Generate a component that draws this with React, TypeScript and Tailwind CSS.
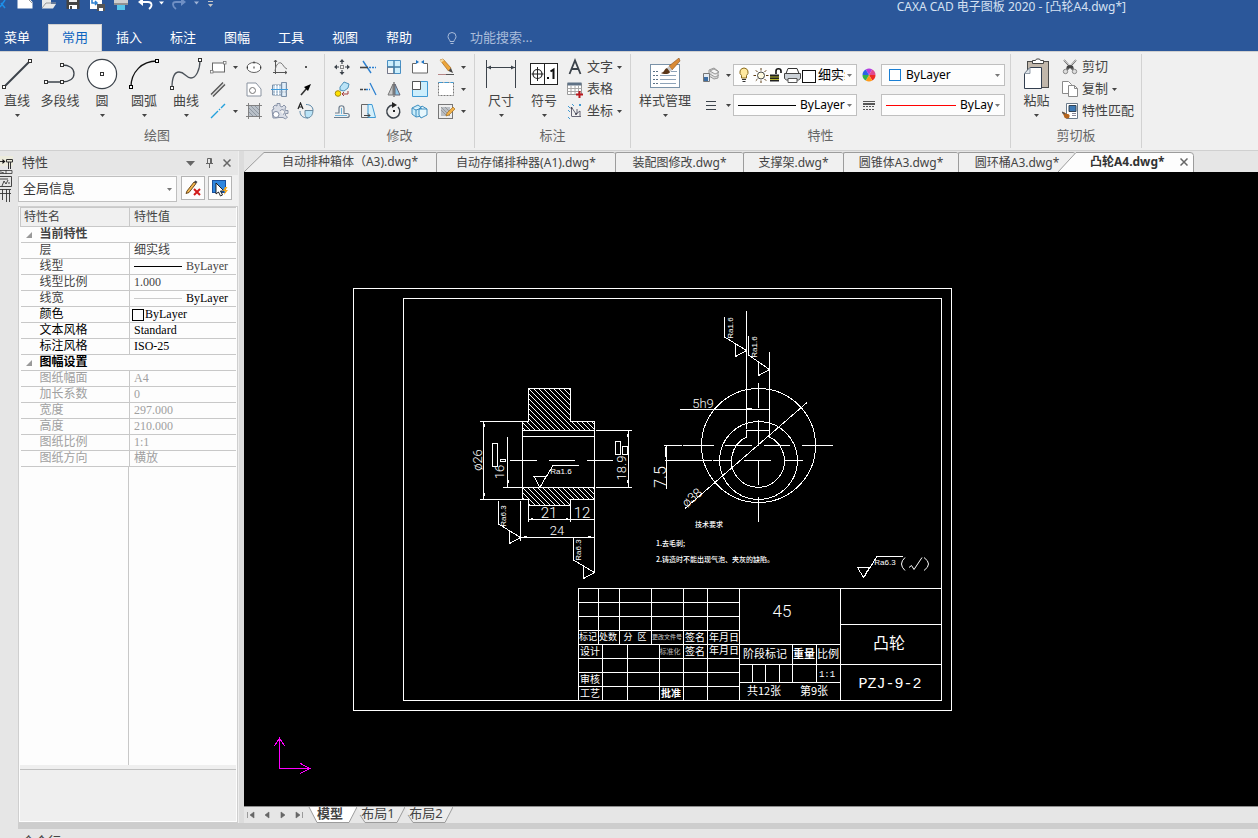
import React from 'react';

type Kids = { children?: React.ReactNode };

const Caret = ({ className = 'text-[#444]' }: { className?: string }) => (
  <svg width="5" height="3" viewBox="0 0 5 3" className={`shrink-0 ${className}`} aria-hidden="true">
    <path d="M0 0h5L2.500 3z" fill="currentColor" />
  </svg>
);

const Ico = ({ children, w = 18, h = 18 }: Kids & { w?: number; h?: number }) => (
  <svg width={w} height={h} viewBox={`0 0 ${w} ${h}`} fill="none" className="shrink-0" aria-hidden="true">
    {children}
  </svg>
);

const Node = ({ x, y, c = '#333' }: { x: number; y: number; c?: string }) => (
  <rect x={x - 1.5} y={y - 1.5} width="3" height="3" fill="#fff" stroke={c} />
);

/* ---------- ribbon icons, large ---------- */
const big = {
  line: (
    <Ico w={32} h={32}>
      <path d="M3 29 29 3" stroke="#3c434b" strokeWidth="2" />
      <Node x={3} y={29} /><Node x={29} y={3} />
    </Ico>
  ),
  polyline: (
    <Ico w={32} h={32}>
      <path d="M2 24h16M18 7c7 0 12 3 12 8.500S25 24 18 24" stroke="#3c434b" strokeWidth="1.300" />
      <Node x={2} y={24} /><Node x={18} y={24} /><Node x={18} y={7} />
    </Ico>
  ),
  circle: (
    <Ico w={32} h={32}>
      <circle cx="16" cy="16" r="14.600" fill="#fff" stroke="#3c434b" strokeWidth="1.200" />
      <Node x={16} y={16} />
    </Ico>
  ),
  arc: (
    <Ico w={32} h={32}>
      <path d="M3 29C3 14 14 3 29 3" stroke="#111" strokeWidth="1.300" />
      <Node x={3} y={29} c="#000" /><Node x={29} y={3} c="#000" />
    </Ico>
  ),
  curve: (
    <Ico w={32} h={32}>
      <path d="M2 30c0-9 2-16 7-16 6 0 7 6 12 6 5 0 9-8 9-18" stroke="#4c535b" strokeWidth="1.300" />
      <Node x={2} y={30} /><Node x={30} y={2} />
    </Ico>
  ),
  dimension: (
    <Ico w={32} h={32}>
      <path d="M1.500 2v28M30.500 2v28M2 9.500h28" stroke="#3c434b" />
      <path d="m2 9.500 4-2v4zM30 9.500l-4-2v4z" fill="#3c434b" />
    </Ico>
  ),
  symbol: (
    <Ico w={30} h={32}>
      <rect x="1.500" y="5.500" width="27" height="21" fill="#fff" stroke="#222" />
      <path d="M15.500 6v20M2.500 16h12M8.500 9v14" stroke="#222" />
      <circle cx="8.500" cy="16" r="4.500" stroke="#222" strokeWidth="1.200" />
      <rect x="18" y="19" width="2" height="2" fill="#111" />
      <path d="m21.500 13.500 3-2v9.500" stroke="#111" strokeWidth="2" />
    </Ico>
  ),
  style: (
    <Ico w={32} h={32}>
      <rect x="1.500" y="6.500" width="29" height="23" fill="#fff" stroke="#7a92a8" />
      <path d="M4 13.500h5M4 17.500h5M4 21.500h5M4 25.500h5" stroke="#5b7288" strokeDasharray="2 1" />
      <path d="M11 17.500h16M11 21.500h16M11 25.500h16M22 13.500h6" stroke="#8ea3b8" />
      <path d="M30 0 20 8l3 4 8-9z" fill="#d98a35" stroke="#8a4f1c" strokeWidth=".6" />
      <path d="m20 8-2 2 3 4 2-2z" fill="#c9c9c9" />
      <path d="M18 10c-3 1-2 4-6 5 3 2 9 1 9-1z" fill="#5b3719" />
    </Ico>
  ),
  paste: (
    <Ico w={32} h={32}>
      <rect x="6.500" y="3.500" width="21" height="26" fill="#c1b7ab" stroke="#4a4a4a" />
      <path d="M11.500 5.500v-3h3l1-1.500h3l1 1.500h3v3z" fill="#fff" stroke="#444" />
      <path d="M3.500 15.500 9 9.500h11.500v21h-17z" fill="#fff" stroke="#333f50" />
      <path d="M3.500 15.500H9v-6z" fill="#dfe5ea" stroke="#7a8794" strokeWidth=".8" />
    </Ico>
  ),
};

/* ---------- ribbon icons, small ---------- */
const small = {
  rect: (
    <Ico>
      <rect x="3.500" y="5" width="12" height="9" fill="#fff" stroke="#666" />
      <rect x="1.500" y="12.500" width="2.500" height="2.500" fill="#fff" stroke="#777" strokeWidth=".8" />
      <rect x="14.500" y="3.500" width="2.500" height="2.500" fill="#fff" stroke="#777" strokeWidth=".8" />
    </Ico>
  ),
  ellipse: (
    <Ico>
      <ellipse cx="9" cy="9.500" rx="7" ry="5" fill="#fff" stroke="#666" />
      <path d="M8.500 9.500h1M8.500 4.500h1M2 9.500h1M15 9.500h1" stroke="#333" strokeWidth="2" />
    </Ico>
  ),
  wave: (
    <Ico>
      <path d="M4.500 2v14M2 14.500h14" stroke="#555" />
      <path d="M4 13c1-7 4-9 6-8s3 5 6 6" stroke="#777" />
      <path d="m3 4 1.500-2L6 4M14 13l2 1.500-2 1.500" stroke="#555" />
    </Ico>
  ),
  point: <Ico><rect x="8" y="8" width="2" height="2" fill="#555" /></Ico>,
  parallel: <Ico><path d="M2 14.500 14 2.500M4 16.500 16 4.500" stroke="#555" strokeWidth="1.400" /><path d="m3 15.500 12-12" stroke="#bbb" /></Ico>,
  contour: (
    <Ico>
      <path d="M2 3h9l5 6v7H2z" fill="#fff" stroke="#8a93a0" />
      <circle cx="7.500" cy="10.500" r="3" fill="#fff" stroke="#777" />
    </Ico>
  ),
  shaft: (
    <Ico>
      <path d="M1.500 5h9v10h-9zM10.500 2.500h5v14h-5z" fill="#c8dced" stroke="#7b8fa6" />
      <path d="M1.500 12h14" stroke="#9ab" />
      <path d="M4.500 5v10M7.500 5v10M13 3v13" stroke="#fff" />
      <path d="M0 9.500h17" stroke="#3e9bdc" />
    </Ico>
  ),
  arrow: <Ico><path d="m4 15 6-7" stroke="#333" strokeWidth="1.600" /><path d="m14 4-7 3 4 4z" fill="#000" /></Ico>,
  center: <Ico><path d="m2 16 7-7M10 8l1-1M12 6l4-4" stroke="#23a0dc" strokeWidth="1.400" /></Ico>,
  hatch: (
    <Ico>
      <rect x="3.500" y="3.500" width="11" height="11" fill="#b9c0c8" />
      <path d="m4 6 8 8M6 4l8 8M4 10l4 4M10 4l4 4" stroke="#8f98a2" />
      <path d="M1 3.500h16M1 14.500h16M3.500 1v16M14.500 1v16" stroke="#777" strokeWidth=".9" />
    </Ico>
  ),
  gear: (
    <Ico>
      <path d="M6 1.500h3v2.500l2 1 2-2 2 2-1 2 .5 1.500H17v3h-2.500v2l2 1.500-2 2-2.500-1.500H8L5 16H2L1 8l2-1-1-2 2-2 2 1z" fill="#d9dde6" stroke="#7f8aa0" strokeWidth=".9" />
      <circle cx="5" cy="12.500" r="3" fill="#fff" stroke="#7f8aa0" />
      <path d="M9 9a2.500 2.500 0 1 1 3 3.500" fill="#f0f0f0" stroke="#7f8aa0" strokeWidth=".9" />
    </Ico>
  ),
  block: (
    <Ico>
      <path d="M8 8.500h8c0 4-2 7-5 7.500-2 0-3-2-3-4z" fill="#b9e3f7" stroke="#6b8ba0" />
      <path d="M9 2.500c4 0 7 2 7 6M3 9c0 4 2 7 8 7" stroke="#5b88a8" />
      <path d="m1 7 2.500-6L6 7M2 5h3" stroke="#222" strokeWidth="1.200" />
    </Ico>
  ),
  move: (
    <Ico>
      <rect x="7.500" y="7.500" width="3" height="3" stroke="#888" />
      <path d="m9 1 2.500 3h-5zM9 17l2.500-3h-5zM1 9l3-2.500v5zM17 9l-3-2.500v5z" fill="#3c434b" />
      <path d="M9 3v3M9 12v3M3 9h3M12 9h3" stroke="#3c434b" strokeWidth="1.200" />
    </Ico>
  ),
  trim: <Ico><path d="m4 3 8 12" stroke="#2b7fd0" strokeWidth="1.400" /><path d="M1 9.500h8" stroke="#444" strokeWidth="1.600" /><path d="M10 9.500h7" stroke="#2b7fd0" strokeDasharray="2 1" strokeWidth="1.600" /></Ico>,
  array: (
    <Ico>
      <path d="M2.500 2.500h13v13h-13z" fill="#cdeefc" stroke="#4a90c4" />
      <path d="M2.500 9h6.500v6.500H2.500z" fill="#f7f7f7" stroke="#778" />
      <path d="M9 2.500v13M2.500 9h13" stroke="#3f7ea8" strokeWidth="1.400" />
    </Ico>
  ),
  stretch: <Ico><path d="M5 5.500H1.500V15h15V5.500H13" fill="#fff" stroke="#666" /><path d="M5 2v4l3-2zM13 2v4l-3-2z" fill="#1d74c4" /></Ico>,
  pencil: (
    <Ico>
      <path d="m3 2 3-1 8 9-2.500 3z" fill="#eda63a" stroke="#a4661b" strokeWidth=".7" />
      <path d="m11.500 13 2.500-3 2 5z" fill="#444" />
      <path d="M1 16.500h8" stroke="#b58686" /><path d="M9 16.500h8" stroke="#555" />
      <path d="m3 2 3-1 1 1.500-3 2z" fill="#f5d9a0" />
    </Ico>
  ),
  copy: (
    <Ico>
      <circle cx="5" cy="13.500" r="2.800" fill="#ffe100" stroke="#a58a10" />
      <path d="m7 7 4-5 5 2-1 4-4 3-4-1z" fill="#b9e3f7" stroke="#4d91b8" />
      <path d="M15 11v3H9m2-2-2 2 2 2" stroke="#a43c3c" />
    </Ico>
  ),
  extend: <Ico><path d="M1 9.500h6" stroke="#444" strokeWidth="1.600" strokeDasharray="3 1" /><path d="M7 9.500h4" stroke="#2b7fd0" strokeWidth="1.600" strokeDasharray="2 1" /><path d="m11 3 6 12" stroke="#2b7fd0" strokeWidth="1.300" /></Ico>,
  mirror: <Ico><path d="M8 4v11H3z" fill="#c9c9c9" stroke="#777" /><path d="M10 4v11h5z" fill="#8fc9ea" stroke="#667" /><path d="M9 2v15" stroke="#444" /></Ico>,
  scale: <Ico><path d="M1.500 1.500h15v15h-15z" fill="#cdeefc" stroke="#3f9ad4" /><path d="M1.500 1.500h8v8h-8z" fill="#fff" stroke="#555" /></Ico>,
  dotted: <Ico><rect x="1.500" y="2.500" width="15" height="13" fill="#fff" stroke="#777" strokeDasharray="2 1" /><path d="M1.500 2.500h15" stroke="#3f9ad4" strokeDasharray="4 2" /></Ico>,
  offset: <Ico><path d="M1 15.500h13c3 0 3-4 0-4h-3V6c0-3-5-3-5 0v5H2" stroke="#6c7c8c" strokeWidth="1.200" /><path d="M2 13.500h12M8.500 6v6" stroke="#6cb4dc" /></Ico>,
  taper: <Ico><path d="M2.500 2.500h9v13h-9z" fill="#eee" stroke="#666" /><path d="M9 2.500h4l3.500 13H9z" fill="#d5f0fb" stroke="#3f9ad4" /><path d="M5 13.500h6m-2-2 2 2-2 2" stroke="#444" /></Ico>,
  rotate: <Ico><path d="M8 3a6.500 6.500 0 1 0 5 2" stroke="#3c434b" strokeWidth="1.500" /><path d="m7 0 5 3-5 3z" fill="#222" /><rect x="8" y="8" width="2" height="2" fill="#222" /></Ico>,
  solid: <Ico><path d="M1 6l6-3 4 3v8l-6 1-4-3z" fill="#c9ecfa" stroke="#3f8fc0" /><path d="M8 7h8v6l-6 3-2-3zM8 7l3-3 5 3M1 6l4 2 6-2M5 8v7" fill="#e7f7fd" stroke="#3f8fc0" /></Ico>,
  editHatch: <Ico><rect x="1.500" y="2.500" width="14" height="14" fill="#eee" stroke="#777" /><path d="M4 5h9v9H4z" fill="#b9bec4" /><path d="m4 8 6 6M4 5l9 9M8 5l5 5" stroke="#999" /><path d="m10 11 6-6 2 2-6 6-3 1z" fill="#f0b14a" stroke="#9a6516" strokeWidth=".6" /></Ico>,
  text: <Ico w={16}><path d="M2.500 16 8 2.500 13.500 16M4.500 11h7" stroke="#3c434b" strokeWidth="1.800" /></Ico>,
  table: (
    <Ico w={16}>
      <path d="M.5 3.500h14v11H.5z" fill="#fff" stroke="#999" /><path d="M.5 2.500h14v3H.5z" fill="#5f7286" />
      <path d="M.5 8.500h14M.5 11.500h14M4 5.500v9M8 5.500v9M11.500 5.500v9" stroke="#aaa" />
      <path d="M9 14.500h7M12.500 11v7" stroke="#b8191f" strokeWidth="2" />
    </Ico>
  ),
  coord: (
    <Ico w={16}>
      <path d="M4.500 5v9M4.500 14.500H14M5 6l4 6 4-3M10 7v5M13 9v5" stroke="#556" strokeWidth=".9" />
      <path d="m1 4 2 2M1 8l2 2M5 2l2 2M12 2l2 2M14 2l-2 2M1 15l2 2" stroke="#3f9ad4" />
      <circle cx="4.500" cy="6" r="1" fill="#445" /><circle cx="9" cy="12" r="1" fill="#445" />
    </Ico>
  ),
  layers: (
    <Ico>
      <path d="m7 4 5-2 4 3v7l-4 1-5-3z" fill="#dcdcdc" stroke="#999" />
      <path d="m8 5 4-2 5 3-4 2zM8 8l5 3 4-2" fill="#f5f5f5" stroke="#888" strokeWidth=".8" />
      <path d="M1.500 7.500h6v8h-6z" fill="#e4ecf4" stroke="#777" /><path d="M2 11h4v4H2z" fill="#3c6ea5" />
    </Ico>
  ),
  lines: <Ico><path d="M4 5.500h10M4 9.500h10M4 13.500h10" stroke="#3c434b" strokeWidth="1.200" /></Ico>,
  wheel: (
    <Ico w={16} h={16}>
      <path d="M8 8 4.750 2.400a6.500 6.500 0 0 1 6.500 0z" fill="#b43ee0" /><path d="m8 8 3.250-5.600A6.500 6.500 0 0 1 14.500 8z" fill="#e14a90" />
      <path d="M8 8h6.500a6.500 6.500 0 0 1-3.250 5.600z" fill="#ee2b24" /><path d="m8 8 3.250 5.600a6.500 6.500 0 0 1-6.500 0z" fill="#ff9a1a" />
      <path d="M8 8 4.750 13.600A6.500 6.500 0 0 1 1.500 8z" fill="#33b34a" /><path d="M8 8H1.500a6.500 6.500 0 0 1 3.250-5.600z" fill="#2b63e8" />
    </Ico>
  ),
  weights: <Ico w={14} h={16}><path d="M1 4.500h12" stroke="#555" /><path d="M1 7h12" stroke="#555" strokeWidth="2" /><path d="M1 9.500h12M1 12.500h12" stroke="#555" strokeDasharray="2 1" /></Ico>,
  cut: (
    <Ico w={16} h={16}>
      <path d="m2 1 9 10M14 1 5 11" stroke="#666" strokeWidth="1.800" />
      <path d="m2 1 6 6M14 1 8 7" stroke="#eee" strokeWidth=".7" />
      <path d="m5 7 3-1 3 1 1 3-4-1-4 1z" fill="#444" />
      <circle cx="3.500" cy="12.500" r="2.200" fill="#ddd" stroke="#888" /><circle cx="12.500" cy="12.500" r="2.200" fill="#ddd" stroke="#888" />
    </Ico>
  ),
  duplicate: <Ico w={16} h={16}><path d="M.5 .5h6l3 3v9h-9z" fill="#fff" stroke="#8a8a8a" /><path d="M6.500 4.500h6l3 3v8h-9z" fill="#fff" stroke="#8a8a8a" /><path d="M12.500 4.500v3h3" stroke="#8a8a8a" /></Ico>,
  match: (
    <Ico w={16} h={16}>
      <path d="M4.500 .5h11v15h-11z" fill="#fff" stroke="#6a7a8a" /><path d="M7 2.500h7v6H7z" fill="#3c78b4" stroke="#345" />
      <path d="M10 10.500h4M10 12.500h4" stroke="#889" /><path d="M0 9c3 0 3 1 5 2 3 0 3 2 2 4-3 1-5 0-5-2z" fill="#b5651d" /><path d="m0 9 3 2" stroke="#555" strokeWidth="1.500" />
    </Ico>
  ),
};

const BigButton = ({ icon, label, caret = true, className }: { icon: React.ReactNode; label: string; caret?: boolean; className: string }) => (
  <button type="button" className={`flex h-17 shrink-0 flex-col items-center pt-0.5 ${className}`}>
    {icon}
    <span className="mt-0.5 h-4 whitespace-nowrap leading-4">{label}</span>
    <span className="mt-1.5 flex h-1">{caret && <Caret />}</span>
  </button>
);

const IconButton = ({ label, children }: Kids & { label: string }) => (
  <button type="button" aria-label={label} className="flex h-5.5 items-center justify-center">{children}</button>
);

const RowButton = ({ icon, label, caret }: { icon: React.ReactNode; label: string; caret?: boolean }) => (
  <button type="button" className="flex h-5.5 items-center whitespace-nowrap leading-4">
    {icon}
    <span className="mr-1 ml-1 pb-0.5">{label}</span>
    {caret && <Caret />}
  </button>
);

const Group = ({ title, className, titleClass = '', children }: Kids & { title: string; className: string; titleClass?: string }) => (
  <section className={`flex shrink-0 flex-col border-r border-[#d2d2d2] ${className}`}>
    <div className="flex h-17.5 pt-0.5">{children}</div>
    <h2 className={`mt-px text-center leading-5 text-[#666] ${titleClass}`}>{title}</h2>
  </section>
);

const Combo = ({ label, value, className, selectClass = '', children }: Kids & { label: string; value: string; className: string; selectClass?: string }) => (
  <div className={`flex items-center border border-[#bfbfbf] bg-[#fdfdfd] pr-1 pl-1 ${className}`}>
    {children}
    <select aria-label={label} className={`min-w-0 flex-1 appearance-none overflow-hidden bg-transparent text-clip ${selectClass}`}>
      <option>{value}</option>
    </select>
    <Caret className="ml-0.5 text-[#777]" />
  </div>
);

const drawTools: [string, React.ReactNode, boolean?][] = [
  ['矩形', small.rect, true], ['椭圆', small.ellipse], ['波浪线', small.wave], ['点', small.point],
  ['平行线', small.parallel, false], ['轮廓', small.contour], ['孔/轴', small.shaft], ['箭头', small.arrow],
  ['中心线', small.center, true], ['剖面线', small.hatch], ['齿轮', small.gear], ['块', small.block],
];

const editTools: [string, React.ReactNode][][] = [
  [['平移', small.move], ['裁剪', small.trim], ['阵列', small.array], ['拉伸', small.stretch], ['删除', small.pencil]],
  [['平移复制', small.copy], ['延伸', small.extend], ['镜像', small.mirror], ['缩放', small.scale], ['打断', small.dotted]],
  [['等距线', small.offset], ['过渡', small.taper], ['旋转', small.rotate], ['分解', small.solid], ['编辑', small.editHatch]],
];

const combo = 'h-5.5 w-[124px] text-[12px] text-black';

const Ribbon = () => (
  <div className="flex h-25 shrink-0 overflow-hidden border-t border-b border-[#d0d0d0] bg-[#f0f0f0] py-0.5 text-[#444]">
    <Group title="绘图" className="w-[325px]" titleClass="pr-2.5">
      <BigButton icon={big.line} label="直线" className="w-[34px]" />
      <BigButton icon={big.polyline} label="多段线" caret={false} className="w-[52px]" />
      <BigButton icon={big.circle} label="圆" className="w-[32px]" />
      <BigButton icon={big.arc} label="圆弧" className="w-[52px]" />
      <BigButton icon={big.curve} label="曲线" className="w-[32px]" />
      <div className="ml-1.5 grid grid-cols-[20px_14px_24px_28px_24px] content-start">
        {drawTools.map(([label, icon, caret]) => (
          <React.Fragment key={label}>
            <IconButton label={label}>{icon}</IconButton>
            {caret !== undefined && <span className="flex items-center justify-center">{caret && <Caret />}</span>}
          </React.Fragment>
        ))}
      </div>
    </Group>
    <Group title="修改" className="w-[150px]">
      <div className="ml-1 grid grid-cols-[26px_26px_26px_26px_26px_8px] content-start">
        {editTools.map((row, i) => (
          <React.Fragment key={i}>
            {row.map(([label, icon]) => <IconButton key={label} label={label}>{icon}</IconButton>)}
            <span className="flex items-center justify-center"><Caret /></span>
          </React.Fragment>
        ))}
      </div>
    </Group>
    <Group title="标注" className="w-[156px] pl-1" titleClass="pr-1">
      <BigButton icon={big.dimension} label="尺寸" className="w-[44px]" />
      <BigButton icon={big.symbol} label="符号" className="w-[42px]" />
      <div className="ml-0.5">
        <RowButton icon={small.text} label="文字" caret />
        <RowButton icon={small.table} label="表格" />
        <RowButton icon={small.coord} label="坐标" caret />
      </div>
    </Group>
    <Group title="特性" className="w-[380px]">
      <BigButton icon={big.style} label="样式管理" className="w-[68px]" />
      <div className="flex flex-col gap-2 pt-2">
        <div className="flex items-center">
          <button type="button" aria-label="图层" className="flex h-5.5 w-6 items-center justify-center">{small.layers}</button>
          <span className="flex w-2.5 justify-center"><Caret /></span>
          <Combo label="当前图层" value="细实线" className={combo} selectClass="text-[13px]">
            <Ico w={80} h={18}>
              <path d="M6 2a4.200 4.200 0 0 0-2.500 7.500V12h5V9.500A4.200 4.200 0 0 0 6 2z" fill="#ffe9a0" stroke="#8a6a1c" />
              <path d="M4 13.500h4M4.500 15.500h3" stroke="#333" />
              <circle cx="23" cy="9.500" r="3.500" fill="#fffbe0" stroke="#444" />
              <path d="M23 2v2.500M23 14.500V17M15.500 9.500H18M28 9.500h2.500M17.800 4.300l1.700 1.700M26.500 13l1.700 1.700M28.200 4.300 26.500 6M19.500 13l-1.700 1.700" stroke="#5a3a10" />
              <path d="M32 8.500h9v7h-9z" fill="#222" /><path d="M32 11h9M32 13.500h9" stroke="#b5b52a" />
              <path d="M38 8V5c0-3 5-3 5 0v2" stroke="#111" strokeWidth="1.600" />
              <path d="M50 2.500h9l2 5H48z" fill="#fff" stroke="#333" /><path d="M46.500 7.500h16v5l-2 1.500h-12l-2-1.500z" fill="#ccd2d8" stroke="#444" />
              <path d="M50 12.500h9v4h-9z" fill="#fff" stroke="#555" />
              <rect x="64.500" y="4.500" width="13" height="12" fill="#fff" stroke="#111" />
            </Ico>
          </Combo>
          <span className="flex w-6 justify-center">{small.wheel}</span>
          <Combo label="颜色" value="ByLayer" className={combo} selectClass="ml-1">
            <Ico w={16} h={16}><rect x="3.500" y="2.500" width="11" height="11" fill="#fff" stroke="#1a7fd4" /></Ico>
          </Combo>
        </div>
        <div className="flex items-center">
          <button type="button" aria-label="线型管理" className="flex h-5.5 w-6 items-center justify-center">{small.lines}</button>
          <span className="flex w-2.5 justify-center"><Caret /></span>
          <Combo label="线型" value="ByLayer" className={combo} selectClass="ml-1">
            <span className="h-px w-[58px] bg-black" />
          </Combo>
          <span className="flex w-6 justify-center">{small.weights}</span>
          <Combo label="线宽" value="ByLayer" className={combo}>
            <span className="mr-1 h-px w-[70px] bg-[#ff0000]" />
          </Combo>
        </div>
      </div>
    </Group>
    <Group title="剪切板" className="w-[131px]">
      <BigButton icon={big.paste} label="粘贴" className="w-[51px]" />
      <div>
        <RowButton icon={small.cut} label="剪切" />
        <RowButton icon={small.duplicate} label="复制" caret />
        <RowButton icon={small.match} label="特性匹配" />
      </div>
    </Group>
  </div>
);

const QuickAccess = () => (
  <svg width="220" height="12" viewBox="0 0 220 12" fill="none" className="shrink-0" aria-hidden="true">
    <path d="m0 7 5-7M1 3l4 5" stroke="#1d8fe8" strokeWidth="1.500" />
    <path d="M17.500 0v8.500h15V2l-3-3z" fill="#fff" /><path d="m29 0 3 3" stroke="#999" />
    <path d="M42 0h9v4h5l-3 4.500H42z" fill="#e9e9e9" /><path d="m42 8 4-5h10" stroke="#9a9a9a" />
    <path d="M66.500 0h13v9h-13z" fill="#444" /><path d="M69 0h8v2h-8z" fill="#eee" /><path d="M69 5h8v4h-8z" fill="#fff" /><path d="M70 6h2v3h-2z" fill="#444" />
    <path d="M90 0h12v9H90z" fill="#fff" /><path d="M92 0v3h5m-2-2 2 2-2 2" stroke="#2b7fd0" strokeWidth="1.500" /><path d="M97 4h8v7h-8z" fill="#555" /><path d="M99 8h4v3h-4z" fill="#fff" />
    <path d="M114 0h14v5h-14z" fill="#cfcfcf" /><path d="M114 4h14" stroke="#555" /><path d="M117 5h8v5h-8z" fill="#57c6ea" />
    <path d="M141 2h7c4 0 5 4 1 7" stroke="#fff" strokeWidth="1.800" /><path d="m138 2 5-4v8z" fill="#fff" />
    <path d="M159 1.500h5l-2.500 3z" fill="#fff" />
    <path d="M183 2h-7c-4 0-4 4 0 7" stroke="#6f8fc4" strokeWidth="1.800" /><path d="m186 2-5-4v8z" fill="#6f8fc4" />
    <path d="M194 1.500h5l-2.500 3z" fill="#9fb3d6" />
    <path d="M208 1.500h5" stroke="#c7c7c7" /><path d="M208 4h5l-2.500 3z" fill="#c7c7c7" />
  </svg>
);

const Header = () => (
  <header className="shrink-0 bg-[#2b579a] text-white">
    <div className="flex h-6 items-start">
      <QuickAccess />
      <h1 className="mr-[132px] ml-auto text-[12px] leading-[14px] whitespace-nowrap text-[#d5e1f2]">CAXA CAD 电子图板 2020 - [凸轮A4.dwg*]</h1>
    </div>
    <nav className="flex h-[27px] items-stretch leading-4">
      <button type="button" className="w-12 pb-0.5 pl-1 text-left">菜单</button>
      <button type="button" className="w-[54px] border border-b-0 border-[#d0d0d0] bg-[#f0f0f0] pb-0.5 text-[#0c64c0]">常用</button>
      {['插入', '标注', '图幅', '工具', '视图', '帮助'].map((t) => (
        <button key={t} type="button" className="w-[54px] pb-0.5">{t}</button>
      ))}
      <label className="ml-5 flex items-center pb-0.5 text-[#a9bcda]">
        <svg width="12" height="14" viewBox="0 0 12 14" fill="none" stroke="currentColor" className="mt-0.5" aria-hidden="true">
          <path d="M4 10.500C4 8.500 2 8 2 5.500a4 4 0 0 1 8 0c0 2.500-2 3-2 5zM4.500 12.500h3" />
        </svg>
        <input aria-label="功能搜索" placeholder="功能搜索..." className="ml-3 w-32 bg-transparent outline-none placeholder:text-[#a9bcda]" />
      </label>
    </nav>
  </header>
);

/* ---------- property panel ---------- */
type Row = { name: string; value?: React.ReactNode; dim?: boolean; head?: boolean; dark?: boolean };

const rows: Row[] = [
  { name: '当前特性', head: true },
  { name: '层', value: '细实线' },
  { name: '线型', value: <span className="flex items-center justify-between pr-2"><i className="h-px w-12 bg-black" />ByLayer</span> },
  { name: '线型比例', value: '1.000' },
  { name: '线宽', value: <span className="flex items-center justify-between pr-2 text-black"><i className="h-px w-12 bg-[#ccc]" />ByLayer</span> },
  { name: '颜色', dark: true, value: <span className="flex items-center"><i className="-ml-0.5 mr-px h-3 w-3 border border-black" />ByLayer</span> },
  { name: '文本风格', value: 'Standard', dark: true },
  { name: '标注风格', value: 'ISO-25', dark: true },
  { name: '图幅设置', head: true, dark: true },
  { name: '图纸幅面', value: 'A4', dim: true },
  { name: '加长系数', value: '0', dim: true },
  { name: '宽度', value: '297.000', dim: true },
  { name: '高度', value: '210.000', dim: true },
  { name: '图纸比例', value: '1:1', dim: true },
  { name: '图纸方向', value: '横放', dim: true },
];

const PropertyPanel = () => (
  <aside className="flex w-[220px] shrink-0 flex-col">
    <div className="flex h-6 items-center pr-0.5 pl-1 text-[#444]">
      <h2 className="flex-1 pb-0.5 leading-4">特性</h2>
      <button type="button" aria-label="选项" className="flex w-5 justify-center">
        <svg width="9" height="5" viewBox="0 0 9 5" aria-hidden="true"><path d="M0 0h9L4.500 5z" fill="#666" /></svg>
      </button>
      <button type="button" aria-label="固定" className="flex w-4.5 justify-center">
        <svg width="9" height="10" viewBox="0 0 9 10" fill="none" stroke="#666" aria-hidden="true"><path d="M2.500 .5h4v5M2.500 .5v5M5.500 .5v5M1 5.500h7M4.500 6v4" /></svg>
      </button>
      <button type="button" aria-label="关闭" className="flex w-4.5 justify-center">
        <svg width="8" height="8" viewBox="0 0 8 8" fill="none" stroke="#666" strokeWidth="1.500" aria-hidden="true"><path d="m.5 .5 7 7M7.500 .5l-7 7" /></svg>
      </button>
    </div>
    <div className="flex justify-between bg-[#f0f0f0] pt-px pr-1.5 pb-1">
      <Combo label="选择范围" value="全局信息" className="h-[26px] w-[159px] text-[#333]" />
      <button type="button" aria-label="清除选择" className="flex h-6 w-6 items-center justify-center border border-[#b4b4b4] bg-[#fdfdfd]">
        <Ico>
          <path d="m3 12 7-9 2 1.500-7 9-3 1z" fill="#f3b64e" stroke="#5b3a10" strokeWidth=".9" /><path d="m10 3 1.500-1.500L13.500 3 12 4.500z" fill="#444" />
          <path d="m10 10 6 6M16 10l-6 6" stroke="#d11a1a" strokeWidth="2" />
        </Ico>
      </button>
      <button type="button" aria-label="快速选择" className="flex h-6 w-6 items-center justify-center border border-[#b4b4b4] bg-[#fdfdfd]">
        <Ico>
          <rect x="1.500" y="1.500" width="13" height="12" fill="#2f86de" stroke="#1a4f9c" />
          <path d="m5 4 8 8h-3.500l2 4-2 1-2-4L5 15z" fill="#fff" stroke="#111" strokeWidth=".9" />
          <path d="m14 8-2 4h2l-1 4 4-5h-2.500l2-3z" fill="#f6a81c" />
        </Ico>
      </button>
    </div>
    <div className="flex min-h-0 flex-1 flex-col border border-[#cfcfcf] bg-[#fdfdfd] px-px pb-px">
      <table className="w-full table-fixed border-collapse text-left text-[12px] leading-[14px] text-[#444] [font-family:'Liberation_Serif','Noto_Sans_CJK_SC',serif]">
        <colgroup><col className="w-[109px]" /><col /></colgroup>
        <thead>
          <tr className="h-[19px] border-t border-b border-[#c8c8c8] bg-[#f0f0f0]">
            <th className="border-r border-l border-[#c8c8c8] py-0 pl-[3px] font-normal">特性名</th>
            <th className="py-0 pl-1 font-normal">特性值</th>
          </tr>
        </thead>
        <tbody>
          {rows.map((r) => (
            <tr key={r.name} className={`h-4 border-b border-[#c8c8c8] ${r.dim ? 'text-[#a0a0a0]' : r.dark ? 'text-black' : 'text-[#444]'}`}>
              {r.head ? (
                <th colSpan={2} className="p-0 font-bold">
                  <span className="flex h-[15px] items-center pl-[5px] leading-[15px]">
                    <svg width="6" height="6" viewBox="0 0 6 6" className="mr-2" aria-hidden="true"><path d="M6 0v6H0z" fill="#999" /></svg>
                    {r.name}
                  </span>
                </th>
              ) : (
                <>
                  <th scope="row" className="border-r border-[#c8c8c8] py-0 pl-[19px] font-normal"><span className="block h-[15px] leading-[15px]">{r.name}</span></th>
                  <td className="py-0 pl-1"><span className="block h-[15px] leading-[15px]">{r.value}</span></td>
                </>
              )}
            </tr>
          ))}
        </tbody>
      </table>
      <div className="grid flex-1 grid-cols-[109px_1fr]">
        <div className="border-r border-[#c8c8c8]" />
      </div>
      <div className="h-1 bg-[#efefef]" />
      <div className="h-13 border-t border-[#c0c0c0] bg-[#efefef]" />
    </div>
  </aside>
);

const SideStrip = () => (
  <div className="w-[18px] shrink-0 pt-1">
    <svg width="14" height="48" viewBox="0 0 14 48" fill="none" stroke="#333" aria-hidden="true">
      <path d="M0 1h13v10H0z" fill="#ecebdc" stroke="none" />
      <path d="M0 6.500h5" /><path d="M2.500 4v5L5.500 6.500z" fill="#111" stroke="none" />
      <path d="M6.500 4.500h6v2.500h-6zM8.500 7v7M10.500 7v7" />
      <path d="M0 15.500h12v3H0zM1 17l3 1M6 15v4" strokeWidth=".8" />
      <path d="M0 21.500h11.500v10H0M0 24h8M2 31l2-5 2 3 2-4M8 28h2" strokeWidth=".9" />
      <path d="M0 34.500h11M2.500 34v11M6.500 34v13M9.500 35v12M0 38.500h11" strokeWidth=".9" />
    </svg>
  </div>
);

/* ---------- document tabs ---------- */
const docs: [string, string][] = [
  ['自动排种箱体（A3).dwg*', 'w-[192px] pl-5'],
  ['自动存储排种器(A1).dwg*', 'w-[179px] border-l'],
  ['装配图修改.dwg*', 'w-[128px] border-l'],
  ['支撑架.dwg*', 'w-[100px] border-l'],
  ['圆锥体A3.dwg*', 'w-[115px] border-l'],
  ['圆环桶A3.dwg*', 'w-[117px] border-l'],
];

const DocTabs = () => (
  <div className="flex h-[21px] shrink-0 items-end overflow-hidden bg-[#e6e6e6] text-[12px] text-[#444]">
    {docs.map(([name, cls], i) => (
      <button key={name} type="button" className={`relative h-5 shrink-0 whitespace-nowrap border-[#9c9c9c] leading-[18px] ${i === 0 ? '' : 'rounded-tl-xs rounded-tr-xs border-t bg-[#f0f0f0]'} ${cls}`}>
        {i === 0 && (
          <svg width="192" height="20" viewBox="0 0 192 20" className="absolute top-0 left-0" aria-hidden="true">
            <path d="M0 20 20 .5h172V20z" fill="#f0f0f0" /><path d="M0 20 20 .5h172" fill="none" stroke="#9c9c9c" />
          </svg>
        )}
        <span className="relative">{name}</span>
      </button>
    ))}
    <button type="button" className="relative -ml-[17px] flex h-5 w-[136px] shrink-0 items-center pl-8 leading-5 font-bold whitespace-nowrap text-[#333]">
      <svg width="136" height="20" viewBox="0 0 136 20" className="absolute top-0 left-0" aria-hidden="true">
        <path d="M0 20 18 .5h114q3.500 0 3.500 3V20z" fill="#fdfdfd" /><path d="M0 20 18 .5h114q3.500 0 3.500 3V20" fill="none" stroke="#9c9c9c" />
      </svg>
      <span className="relative flex-1 text-left">凸轮A4.dwg*</span>
      <svg width="8" height="8" viewBox="0 0 8 8" className="relative mr-1.5" fill="none" stroke="#666" strokeWidth="1.500" aria-hidden="true"><path d="m.5 .5 7 7M7.500 .5l-7 7" /></svg>
    </button>
  </div>
);

/* ---------- drawing ---------- */
type LabelProps = { x: number; y: number; s: number; t: string; r?: number; cls?: string };

const T = ({ x, y, s, t, r, cls = '' }: LabelProps) => (
  <text x={x} y={y} fontSize={s} textAnchor="middle" fill="#fff" className={cls} transform={r ? `rotate(${r} ${x} ${y})` : undefined}>{t}</text>
);

const mono = "[font-family:'Liberation_Mono',monospace]";
const dim = "[font-family:Roboto,sans-serif] font-light";
const rough = "[font-family:'Liberation_Sans',sans-serif]";
const cjk = "[font-family:'Noto_Sans_CJK_SC',sans-serif]";

const labels: LabelProps[] = [
  { x: 482, y: 460, s: 13, t: 'ø26', r: -90, cls: dim },
  { x: 504, y: 472, s: 13, t: '16', r: -90, cls: dim },
  { x: 626, y: 468, s: 13, t: '18.9', r: -90, cls: dim },
  { x: 549, y: 518, s: 15, t: '21', cls: dim },
  { x: 582, y: 518, s: 15, t: '12', cls: dim },
  { x: 557, y: 535, s: 13, t: '24', cls: dim },
  { x: 703, y: 408, s: 13, t: '5h9', cls: dim },
  { x: 666, y: 477, s: 16, t: '7.5', r: -90, cls: dim },
  { x: 695, y: 501, s: 13, t: 'ø38', r: -41, cls: dim },
  { x: 561, y: 474, s: 8, t: 'Ra1.6', cls: rough },
  { x: 506, y: 516, s: 8, t: 'Ra6.3', r: -90, cls: rough },
  { x: 581, y: 550, s: 8, t: 'Ra6.3', r: -90, cls: rough },
  { x: 733, y: 328, s: 8, t: 'Ra1.6', r: -90, cls: rough },
  { x: 757, y: 347, s: 8, t: 'Ra1.6', r: -90, cls: rough },
  { x: 885, y: 565, s: 8, t: 'Ra6.3', cls: rough },
  { x: 709, y: 527, s: 7, t: '技术要求', cls: `${cjk} font-medium` },
  { x: 782, y: 617, s: 17, t: '45', cls: dim },
  { x: 890, y: 688, s: 15, t: 'PZJ-9-2', cls: mono },
  { x: 889, y: 649, s: 16, t: '凸轮', cls: cjk },
  { x: 588, y: 640, s: 9, t: '标记', cls: cjk },
  { x: 608, y: 640, s: 9, t: '处数', cls: cjk },
  { x: 628, y: 640, s: 9, t: '分', cls: cjk },
  { x: 642, y: 640, s: 9, t: '区', cls: cjk },
  { x: 667, y: 639, s: 6, t: '更改文件号', cls: `${cjk} opacity-80` },
  { x: 695, y: 641, s: 10, t: '签名', cls: cjk },
  { x: 724, y: 641, s: 10, t: '年月日', cls: cjk },
  { x: 590, y: 655, s: 10, t: '设计', cls: cjk },
  { x: 670, y: 654, s: 7, t: '标准化', cls: `${cjk} opacity-70` },
  { x: 695, y: 655, s: 10, t: '签名', cls: cjk },
  { x: 724, y: 654, s: 10, t: '年月日', cls: cjk },
  { x: 590, y: 683, s: 10, t: '审核', cls: cjk },
  { x: 590, y: 697, s: 10, t: '工艺', cls: cjk },
  { x: 671, y: 697, s: 10, t: '批准', cls: `${cjk} font-bold` },
  { x: 765, y: 658, s: 11, t: '阶段标记', cls: cjk },
  { x: 804, y: 658, s: 11, t: '重量', cls: `${cjk} font-bold` },
  { x: 828, y: 658, s: 11, t: '比例', cls: cjk },
  { x: 827, y: 677, s: 9, t: '1:1', cls: mono },
  { x: 764, y: 695, s: 11, t: '共12张', cls: cjk },
  { x: 814, y: 695, s: 11, t: '第9张', cls: cjk },
];

const Drawing = () => (
  <svg width="1014" height="634" viewBox="244 172 1014 634" fill="none" stroke="#fff" className="block" role="img" aria-label="凸轮零件图">
    <defs>
      <pattern id="hatch" width="5" height="5" patternUnits="userSpaceOnUse">
        <path d="M-1-1l7 7M-1 4l2 2M4-1l2 2" stroke="#fff" strokeWidth="1" shapeRendering="crispEdges" />
      </pattern>
    </defs>
    <g shapeRendering="crispEdges">
      <path d="M353.500 288.500h598v422h-598zM403.500 298.500h538v402h-538z" />
      {/* section view */}
      <path fill="url(#hatch)" d="M528.500 388.500h42v33h24v9h-72v-9h6zM522.500 487.500h72v12h-24v6h-42v-6h-6z" />
      <path d="M522.500 430v57M594.500 430v57M522 436.500h72" />
      <path d="M510 460.500h27M549 460.500h26M587 460.500h26" />
      <path d="M483.500 421v78M480 421.500h42M480 499.500h42M507.500 437v50M503 487.500h19" />
      <path d="M492.500 443.500h5v23h-5zM500.500 459.500h5v2h-5zM615.500 441.500h5v13h-5zM622.500 446.500h5v8h-5z" />
      <path d="M628.500 430v57M596 430.500h36M596 487.500h36" />
      <path d="M528.500 506v16M570.500 506v16M528 519.500h66M594.500 500v73M520.500 501v40M520 537.500h74" />
      <path d="M484.500 424v3M484.500 493v3M508.500 480v3M627.500 434v3M627.500 480v3M524 536.500h3M588 536.500h3M531 518.500h2M566 518.500h2" />
      <path d="M534 476.500h12l-6 11zM540 487l13-21.500h26" />
      <path d="M498.500 501v23l22 13.500M509.500 530.500v13l11-6" />
      <path d="M573.500 538v22l21 12.500M583.500 565.500v13l11-6" />
      {/* front view */}
      <circle cx="758.500" cy="445.500" r="57" />
      <circle cx="758.500" cy="460.500" r="39" />
      <path d="M746.500 437v-6.500h23v6.500A26.500 26.500 0 1 1 746.500 437" />
      <path d="M746.500 311v118M769.500 352v84M758.500 383v25M758.500 420v26M758.500 460v25M758.500 497v25" />
      <path d="M664 445.500h18M683 445.500h31M725 445.500h27M764 445.500h26M802 445.500h31" />
      <path d="M665 460.500h47M713 460.500h18M744 460.500h27M784 460.500h19" />
      <path d="M680 409.500h89M746 408.500h6M666.500 445v44M665.500 447v10M685 508.500l122-106" />
      <path d="M724.500 317v20l22 13.500M735.500 343.500v13l11-6" />
      <path d="M748.500 336v19l21 14.500M758.500 362v13.500l11-6" />
      {/* general roughness */}
      <path d="M857.500 567.500h12l-6 10zM864 577l13-20.500h26" />
      {/* title block */}
      <path d="M578.500 700v-111.500h363M578 602.500h161M578 616.500h161M578 630.500h161M578 644.500h262M578 658.500h161M578 672.500h161M578 686.500h161" />
      <path d="M598.500 588v56M619.500 588v56M651.500 588v56M683.500 588v112M707.500 588v112M739.500 588v112M602.500 644v56M627.500 644v56M659.500 644v56" />
      <path d="M739 664.500h202M739 682.500h101M792.500 644v38M816.500 644v38M752.500 664v18M765.500 664v18M779.500 664v18M840.500 588v112M840 624.500h101" />
      <path stroke="#f0f" d="M279.500 738v30.500H310M274.500 746l5-8 5 8M300.500 763.500l9 5-9 5" />
    </g>
    <path d="M905 557.500q-7 6.500 0 13M924 557.500q9 6.500 0 13M909 567.500l2.500-2 2.500 4 8-12" />
    <g stroke="none">
      {labels.map((l, i) => <T key={i} {...l} />)}
      <text x="656" y="546" fontSize="7" fill="#fff" className={`${cjk} font-medium`}>1.去毛刺;</text>
      <text x="656" y="562" fontSize="7" fill="#fff" className={`${cjk} font-medium`}>2.铸造时不能出现气泡、夹灰的缺陷。</text>
    </g>
  </svg>
);

const LayoutTabs = () => (
  <div className="flex h-[17px] shrink-0 items-stretch border-t border-[#8c8c8c] bg-[#e6e6e6] text-[13px] leading-3 text-[#444]">
    <div className="flex w-[65px] items-center justify-between pr-1.5 pl-[3px]">
      {['M.500 1v6M7 1v6L3 4z', 'M6 1v6L2 4z', 'M2 1v6l4-3z', 'M1 1v6l4-3zM7.500 1v6'].map((d, i) => (
        <button key={d} type="button" aria-label={['首页', '上一页', '下一页', '末页'][i]}>
          <svg width="8" height="8" viewBox="0 0 8 8" fill="#666" stroke="#666" strokeWidth=".6" className="block" aria-hidden="true"><path d={d} /></svg>
        </button>
      ))}
    </div>
    {['模型', '布局1', '布局2'].map((t, i) => (
      <button key={t} type="button" className={`relative w-12 pr-1.5 pb-1 text-center ${i === 0 ? 'font-bold' : ''}`}>
        <svg width="54" height="16" viewBox="0 0 54 16" className="absolute top-0 -left-1.5" aria-hidden="true">
          <path d="M6 0l8 15.500h32L54 0z" fill={i === 0 ? '#fff' : '#ececec'} />
          <path d={i === 0 ? 'M6 0l8 15.500h32L54 0' : 'M9 8l5 7.500h32L54 0'} fill="none" stroke="#9c9c9c" />
        </svg>
        <span className="relative">{t}</span>
      </button>
    ))}
  </div>
);

export default function App() {
  return (
    <div className="flex h-screen flex-col overflow-hidden bg-[#e6e6e6] text-[13px] [font-family:'Noto_Sans','Noto_Sans_CJK_SC',sans-serif]">
      <Header />
      <Ribbon />
      <div className="flex min-h-0 flex-1">
        <SideStrip />
        <div className="flex min-w-0 flex-1 flex-col">
          <div className="flex min-h-0 flex-1">
            <PropertyPanel />
            <div className="w-1.5 shrink-0 border-l border-[#eee] bg-[#dcdcdc]" />
            <main className="flex min-w-0 flex-1 flex-col">
              <DocTabs />
              <div className="min-h-0 flex-1 overflow-hidden bg-black"><Drawing /></div>
              <LayoutTabs />
            </main>
          </div>
          <div className="h-1.5 shrink-0 bg-[#cdcdcd]" />
          <footer className="h-[9px] shrink-0 overflow-hidden pt-1 pl-1 leading-4 text-[#444]">命令行</footer>
        </div>
      </div>
    </div>
  );
}
